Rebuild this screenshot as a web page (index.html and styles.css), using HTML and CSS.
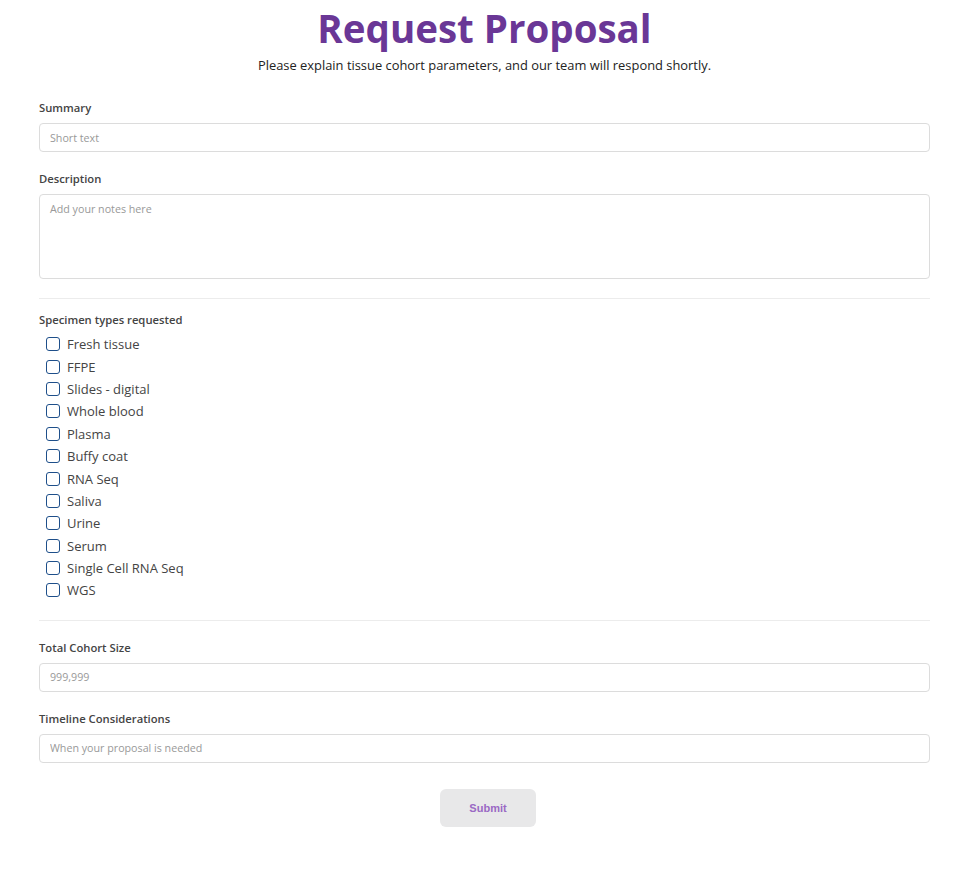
FILE: index.html
```html
<!DOCTYPE html>
<html>
<head>
<meta charset="utf-8">
<link rel="stylesheet" href="styles.css">
</head>
<body>
<div class="page">
  <h1 class="title">Request Proposal</h1>
  <p class="subtitle">Please explain tissue cohort parameters, and our team will respond shortly.</p>
  <form class="form">
    <div class="field">
      <label class="label">Summary</label>
      <input class="input" type="text" placeholder="Short text">
    </div>
    <div class="field">
      <label class="label">Description</label>
      <textarea class="textarea" placeholder="Add your notes here"></textarea>
    </div>
    <hr class="divider">
    <div class="field">
      <label class="label">Specimen types requested</label>
      <div class="checks">
        <label class="check"><span class="box"></span>Fresh tissue</label>
        <label class="check"><span class="box"></span>FFPE</label>
        <label class="check"><span class="box"></span>Slides - digital</label>
        <label class="check"><span class="box"></span>Whole blood</label>
        <label class="check"><span class="box"></span>Plasma</label>
        <label class="check"><span class="box"></span>Buffy coat</label>
        <label class="check"><span class="box"></span>RNA Seq</label>
        <label class="check"><span class="box"></span>Saliva</label>
        <label class="check"><span class="box"></span>Urine</label>
        <label class="check"><span class="box"></span>Serum</label>
        <label class="check"><span class="box"></span>Single Cell RNA Seq</label>
        <label class="check"><span class="box"></span>WGS</label>
      </div>
    </div>
    <hr class="divider divider-wide">
    <div class="field">
      <label class="label">Total Cohort Size</label>
      <input class="input" type="text" placeholder="999,999">
    </div>
    <div class="field">
      <label class="label">Timeline Considerations</label>
      <input class="input" type="text" placeholder="When your proposal is needed">
    </div>
    <div class="actions">
      <button class="submit" type="button">Submit</button>
    </div>
  </form>
</div>
</body>
</html>
```
FILE: styles.css
```css
* { box-sizing: border-box; }
html, body { margin: 0; padding: 0; background: #fff; }
body { font-family: "Open Sans", "Liberation Sans", sans-serif; color: #333; }
.page { width: 891px; margin-left: 39px; padding-top: 4px; }
.title {
  margin: 0;
  text-align: center;
  font-size: 38.5px;
  line-height: 48px;
  font-weight: 700;
  color: #6a3796;
}
.subtitle {
  margin: 4px 0 0;
  text-align: center;
  font-size: 12.9px;
  line-height: 18px;
  color: #222;
}
.form { margin-top: 26px; }
.field { display: flex; flex-direction: column; margin-bottom: 19px; }
.label {
  font-size: 11.25px;
  line-height: 15px;
  font-weight: 600;
  color: #444;
  margin-bottom: 8px;
}
.input, .textarea {
  width: 100%;
  border: 1px solid #dcdcdc;
  border-radius: 4px;
  font-family: "Open Sans", "Liberation Sans", sans-serif;
  font-size: 10.7px;
  color: #333;
  padding: 0 10px;
  outline: none;
  background: #fff;
}
.input { height: 29px; }
.textarea { height: 85px; padding: 7px 10px; resize: none; display: block; }
.input::placeholder, .textarea::placeholder { color: #999; }
.divider { border: 0; border-top: 1px solid #ececec; margin: 0 0 13px; }
.divider-wide { margin-bottom: 19px; }
.checks { display: flex; flex-direction: column; padding-left: 7px; margin-top: -2px; margin-bottom: -1px; }
.check {
  display: flex;
  align-items: center;
  height: 22.4px;
  font-size: 13px;
  color: #444;
}
.box {
  width: 14px;
  height: 14px;
  border: 1.5px solid #1e4f8a;
  border-radius: 3px;
  margin-right: 7px;
  flex: none;
}
.actions { display: flex; justify-content: center; margin-top: 26px; padding-left: 7px; }
.submit {
  width: 96px;
  height: 38px;
  border: 0;
  border-radius: 6px;
  background: #e8e8e9;
  color: #9a69c4;
  font-family: "Liberation Sans", Arial, sans-serif;
  font-weight: 700;
  font-size: 11px;
}
```
